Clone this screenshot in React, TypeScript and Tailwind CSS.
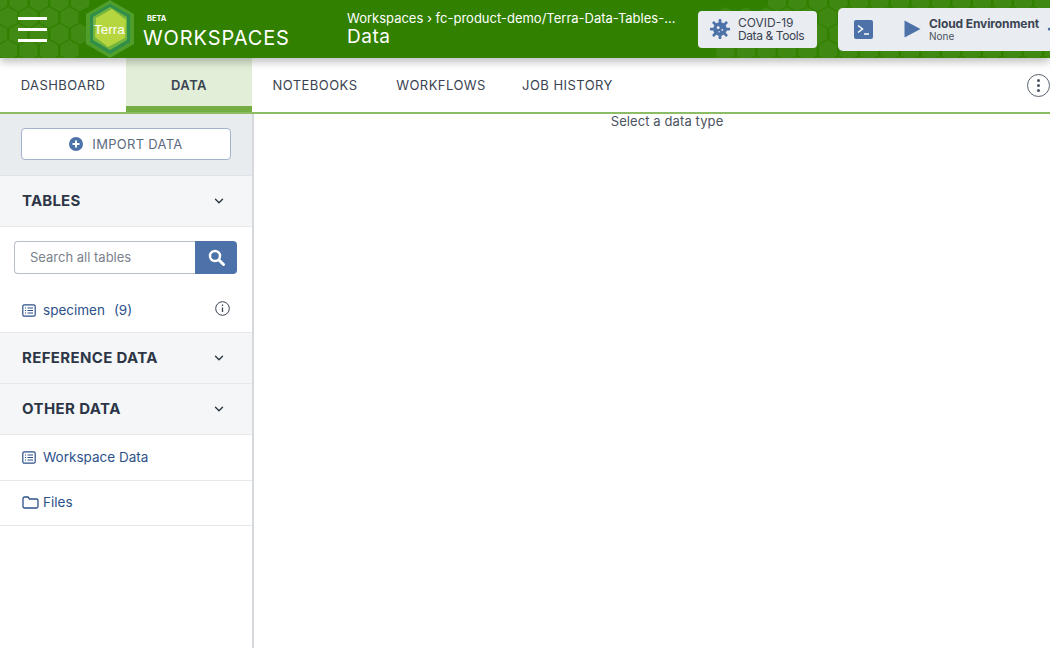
import React from 'react';
import { ChevronDown } from 'lucide-react';

const font = { fontFamily: 'Inter' };

// hex backdrop in the header bar
const hexPoints = (cx: number, cy: number, r: number) => {
    const pts: string[] = [];
    for (let i = 0; i < 6; i++) {
        const a = (Math.PI / 3) * i + Math.PI / 6;
        pts.push(`${(cx + r * Math.cos(a)).toFixed(1)},${(cy + r * Math.sin(a)).toFixed(1)}`);
    }
    return pts.join(' ');
};

const HexBackdrop = () => {
    const cells: { x: number; y: number; o: number }[] = [];
    for (let row = 0; row < 5; row++) {
        for (let col = 0; col < 56; col++) {
            const x = col * 20.5 + (row % 2 ? 10 : 0) - 2;
            const y = row * 16.5 + 1;
            const left = x < 88 && x + y * 0.5 < 105;
            const right = x > 760 || (x > 715 && y > 8);
            if (left) cells.push({ x, y, o: 0.08 });
            else if (right) cells.push({ x, y, o: 0.07 });
        }
    }
    return (
        <svg className="absolute inset-0" width="1050" height="58">
            {cells.map((c, i) => (
                <polygon key={i} points={hexPoints(c.x, c.y, 10.5)} fill="#fff" fillOpacity={c.o} />
            ))}
        </svg>
    );
};

const TerraLogo = () => (
    <svg width="58" height="58" viewBox="0 0 58 58" className="shrink-0">
        <polygon points="29,0 53,14 53,44 29,58 5,44 5,14" fill="#4f9d2a" />
        <polygon points="29,4 49,15 49,42 29,54 9,42 9,15" fill="#2f8f4a" />
        <polygon points="29,7 46,17 46,40 29,50 12,40 12,17" fill="#74b63d" />
        <polygon points="31,9 45,20 44,38 27,47 14,37 15,18" fill="#b5d63f" />
        <text x="28.5" y="33.5" textAnchor="middle" fontFamily="Liberation Sans" fontSize="13.5" fill="#fff">
            Terra
        </text>
    </svg>
);

const TableIcon = () => (
    <svg width="14" height="13" viewBox="0 0 14 13" fill="none" stroke="#2c5189" strokeWidth="1.2" className="shrink-0">
        <rect x="0.8" y="0.8" width="12.4" height="11.4" rx="1.5" />
        <path d="M3 4h1M5.5 4H11M3 6.5h1M5.5 6.5H11M3 9h1M5.5 9H11" />
    </svg>
);

const FolderIcon = () => (
    <svg width="17" height="13" viewBox="0 0 17 13" fill="none" stroke="#2c5189" strokeWidth="1.3" className="shrink-0">
        <path d="M1 2.5a1.5 1.5 0 0 1 1.5-1.5h3.5l1.5 2h7a1.5 1.5 0 0 1 1.5 1.5v6a1.5 1.5 0 0 1-1.5 1.5h-12a1.5 1.5 0 0 1-1.5-1.5z" />
    </svg>
);

const VirusIcon = () => (
    <svg width="22" height="22" viewBox="0 0 24 24" fill="#4d72aa" className="shrink-0">
        {[0, 45, 90, 135, 180, 225, 270, 315].map((a) => (
            <rect key={a} x="10.5" y="1" width="3" height="6" rx="1" transform={`rotate(${a} 12 12)`} />
        ))}
        <circle cx="12" cy="12" r="7.5" />
        <circle cx="10" cy="10.5" r="1.6" fill="#e9ecf0" />
        <circle cx="14.5" cy="13" r="1" fill="#e9ecf0" />
        <circle cx="11" cy="15" r="0.8" fill="#e9ecf0" />
    </svg>
);

const SectionHeader = ({ title, tracking }: { title: string; tracking: string }) => (
    <div className="h-[51px] flex items-center justify-between pl-[22px] pr-[26px] bg-[#f4f6f8] border-b border-[#e6e8ec]">
        <span className={`text-[15px] font-bold text-[#2d3646] ${tracking}`}>{title}</span>
        <ChevronDown size={14} strokeWidth={2.4} color="#2d3646" />
    </div>
);

const tabs = [
    { label: 'DASHBOARD', w: 'w-[126px]' },
    { label: 'DATA', w: 'w-[126px]', active: true },
    { label: 'NOTEBOOKS', w: 'w-[126px]' },
    { label: 'WORKFLOWS', w: 'w-[126px]' },
    { label: 'JOB HISTORY', w: 'w-[127px]' },
];

export default function App() {
    return (
        <div className="w-[1050px] h-[648px] overflow-hidden bg-white flex flex-col" style={font}>
            <header className="relative h-[58px] shrink-0 bg-[#318000] flex items-center shadow-[0_4px_8px_rgba(0,0,0,0.25)] z-10">
                <HexBackdrop />
                <div className="relative flex items-center w-full">
                    <div className="w-[81px] shrink-0 pl-[18px] flex flex-col gap-[8px]">
                        <div className="w-[29px] h-[3px] bg-white" />
                        <div className="w-[29px] h-[3px] bg-white" />
                        <div className="w-[29px] h-[3px] bg-white" />
                    </div>
                    <TerraLogo />
                    <div className="ml-[4px] w-[204px] shrink-0 pt-[6px] flex flex-col text-white">
                        <span className="pl-[4px] text-[7.5px] font-bold leading-[9px]">BETA</span>
                        <span className="mt-[3px] text-[20px] leading-[24px] tracking-[0.9px]">WORKSPACES</span>
                    </div>
                    <div className="w-[351px] shrink-0 pb-[2px] flex flex-col text-white">
                        <span className="text-[13px] leading-[18px] whitespace-nowrap">
                            Workspaces {'›'} fc-product-demo/Terra-Data-Tables-...
                        </span>
                        <span className="text-[19px] leading-[20px] tracking-[0.5px]">Data</span>
                    </div>
                    <div className="w-[119px] h-[37px] shrink-0 bg-[#e9ecf0] rounded-[4px] flex items-center pl-[11px] gap-[7px] text-[#3a4352]">
                        <VirusIcon />
                        <div className="flex flex-col text-[12px] leading-[13px] whitespace-nowrap">
                            <span>COVID-19</span>
                            <span className="tracking-[-0.4px]">Data &amp; Tools</span>
                        </div>
                    </div>
                    <div className="ml-[21px] w-[240px] h-[43px] shrink-0 bg-[#e9ecf0] rounded-[5px] flex items-center pl-[16px]">
                        <svg width="19" height="19" viewBox="0 0 19 19" className="shrink-0">
                            <rect width="19" height="19" rx="2" fill="#4d72aa" />
                            <path d="M4 5.5 8.5 9 4 12.5" fill="none" stroke="#fff" strokeWidth="1.5" />
                            <path d="M10 14h5" stroke="#fff" strokeWidth="1.5" />
                        </svg>
                        <svg width="17" height="18" viewBox="0 0 17 18" className="ml-[31px] shrink-0">
                            <path d="M0.5 0.5 16.5 9 0.5 17.5z" fill="#4d72aa" />
                        </svg>
                        <div className="ml-[8px] flex flex-col whitespace-nowrap">
                            <span className="text-[12px] font-bold leading-[14px] tracking-[-0.1px] text-[#3a4352]">Cloud Environment</span>
                            <span className="text-[10px] leading-[11px] text-[#4a5361]">None</span>
                        </div>
                        <div className="ml-[8px] shrink-0">
                            <VirusIcon />
                        </div>
                    </div>
                </div>
            </header>

            <nav className="h-[56px] shrink-0 flex items-stretch border-b-2 border-[#8cbc64] bg-white">
                {tabs.map((t) => (
                    <div
                        key={t.label}
                        className={`${t.w} flex items-center justify-center text-[13px] tracking-[0.45px] text-[#3a4352] ${
                            t.active ? 'bg-[#e2eed8] border-b-[6px] border-[#74ae43] font-semibold pt-[8px]' : 'pt-[2px]'
                        }`}
                    >
                        {t.label}
                    </div>
                ))}
                <div className="ml-auto flex items-center">
                    <div className="w-[23px] h-[23px] rounded-full border border-[#5a6370] flex flex-col items-center justify-center gap-[2px]">
                        <span className="w-[3px] h-[3px] rounded-full bg-[#4a5361]" />
                        <span className="w-[3px] h-[3px] rounded-full bg-[#4a5361]" />
                        <span className="w-[3px] h-[3px] rounded-full bg-[#4a5361]" />
                    </div>
                </div>
            </nav>

            <div className="flex flex-1 min-h-0">
                <aside className="w-[254px] shrink-0 border-r-2 border-[#d5d8dd] flex flex-col bg-white">
                    <div className="h-[62px] bg-[#e9ecef] pl-[21px] pt-[14px] border-b border-[#e0e3e7]">
                        <div className="w-[210px] h-[32px] bg-white border border-[#a3b3cb] rounded-[4px] flex items-center justify-center gap-[9px]">
                            <svg width="14" height="14" viewBox="0 0 14 14">
                                <circle cx="7" cy="7" r="7" fill="#4d72aa" />
                                <path d="M7 3.5v7M3.5 7h7" stroke="#fff" strokeWidth="2" />
                            </svg>
                            <span className="pt-px text-[13px] text-[#5d6b80] tracking-[0.3px]">IMPORT DATA</span>
                        </div>
                    </div>
                    <SectionHeader title="TABLES" tracking="tracking-[0.2px]" />
                    <div className="h-[106px] border-b border-[#e6e8ec] flex flex-col">
                        <div className="pt-[14px] pl-[14px] flex">
                            <div className="w-[181px] h-[33px] bg-white border border-[#b9bfc8] border-r-0 rounded-l-[4px] pl-[15px] flex items-center text-[13px] text-[#7b828d]">
                                Search all tables
                            </div>
                            <div className="w-[42px] h-[33px] bg-[#4d72aa] rounded-r-[4px] flex items-center justify-center">
                                <svg width="17" height="17" viewBox="0 0 17 17" fill="none" stroke="#fff">
                                    <circle cx="7" cy="7" r="5" strokeWidth="2.5" />
                                    <path d="M11 11l4.5 4.5" strokeWidth="3" strokeLinecap="round" />
                                </svg>
                            </div>
                        </div>
                        <div className="mt-[26px] pl-[22px] pr-[22px] flex items-center text-[13.5px] text-[#2c5189]">
                            <TableIcon />
                            <span className="ml-[7px]">specimen</span>
                            <span className="ml-[9px]">(9)</span>
                            <svg className="ml-auto -mt-[3px]" width="15" height="15" viewBox="0 0 15 15" fill="none" stroke="#3a4352">
                                <circle cx="7.5" cy="7.5" r="6.8" />
                                <path d="M7.5 6.5v4.5M7.5 3.5v1.5" strokeWidth="1.3" />
                            </svg>
                        </div>
                    </div>
                    <SectionHeader title="REFERENCE DATA" tracking="tracking-[0.35px]" />
                    <SectionHeader title="OTHER DATA" tracking="tracking-[0.4px]" />
                    <div className="h-[46px] border-b border-[#e6e8ec] pl-[22px] flex items-center text-[13.5px] text-[#2c5189]">
                        <TableIcon />
                        <span className="ml-[7px]">Workspace Data</span>
                    </div>
                    <div className="h-[45px] border-b border-[#e6e8ec] pl-[22px] pb-[2px] flex items-center text-[13.5px] text-[#2c5189]">
                        <FolderIcon />
                        <span className="ml-[4px]">Files</span>
                    </div>
                </aside>
                <main className="flex-1 flex justify-center pl-[30px]">
                    <span className="text-[13px] leading-[14px] tracking-[0.1px] text-[#4a5361]">Select a data type</span>
                </main>
            </div>
        </div>
    );
}
